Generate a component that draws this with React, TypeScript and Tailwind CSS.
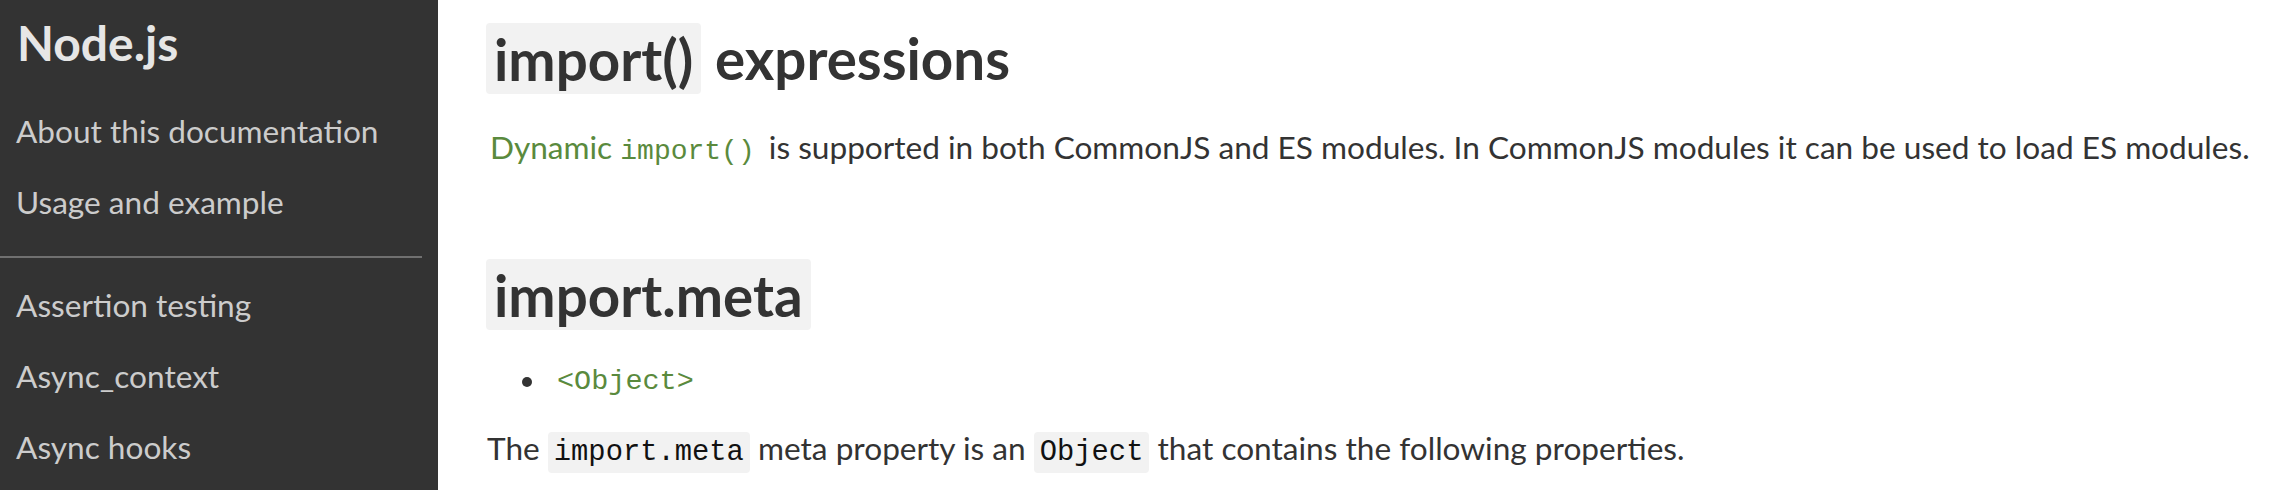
import React from 'react';

const navTop = ['About this documentation', 'Usage and example'];
const navBottom = ['Assertion testing', 'Async_context', 'Async hooks'];

const mono = "font-['Liberation_Mono',monospace]";

const App: React.FC = () => {
  return (
    <div className="flex h-[490px] w-[2276px] overflow-hidden bg-white font-['Lato',sans-serif] text-[#333]">
      {/* sidebar */}
      <div className="flex w-[438px] shrink-0 flex-col bg-[#333]">
        <div className="ml-[17px] mt-[19px] text-[48px] font-bold leading-[48px] text-[#e6e6e6]">Node.js</div>
        <div className="mt-[29px] flex flex-col">
          {navTop.map((item) => (
            <div key={item} className="pl-[16px] text-[31.6px] leading-[71px] text-[#ccc]">
              {item}
            </div>
          ))}
        </div>
        <div className="mt-[18px] h-[2px] w-[422px] bg-[#707070]" />
        <div className="mt-[12px] flex flex-col">
          {navBottom.map((item) => (
            <div key={item} className="pl-[16px] text-[31.6px] leading-[71px] text-[#ccc]">
              {item}
            </div>
          ))}
        </div>
      </div>

      {/* content */}
      <div className="flex min-w-0 flex-1 flex-col pl-12 whitespace-nowrap">
        <h2 className="mt-[22px] text-[56.5px] font-bold leading-[72px]">
          <code className="rounded-[4px] bg-[#f2f2f2] px-[8px] py-[1.5px] font-['Lato',sans-serif]">import()</code> expressions
        </h2>
        <p className="mt-[31px] pl-[4px] text-[31.6px] leading-[45px]">
          <span className="text-[#5a8a3d]">
            Dynamic <code className={`${mono} text-[28px] pr-[6px]`}>import()</code>
          </span>{' '}
          is supported in both CommonJS and ES modules. In CommonJS modules it can be used to load ES modules.
        </p>
        <h2 className="mt-[84px] text-[56.5px] font-bold leading-[72px]">
          <code className="rounded-[4px] bg-[#f2f2f2] px-[8px] py-[1.5px] font-['Lato',sans-serif]">import.meta</code>
        </h2>
        <div className="mt-[29px] flex items-center text-[31.6px] leading-[45px]">
          <span className="ml-[36px] h-[10px] w-[10px] rounded-full bg-[#333]" />
          <span className={`ml-[25px] ${mono} text-[28.5px] text-[#5a8a3d]`}>&lt;Object&gt;</span>
        </div>
        <p className="mt-[22px] pl-[1px] text-[31.6px] leading-[45px]">
          The{' '}
          <code className={`${mono} rounded-[4px] bg-[#f2f2f2] px-[6px] py-[4px] text-[28.8px] text-[#111]`}>import.meta</code>{' '}
          meta property is an{' '}
          <code className={`${mono} rounded-[4px] bg-[#f2f2f2] px-[6px] py-[4px] text-[28.8px] text-[#111]`}>Object</code>{' '}
          that contains the following properties.
        </p>
      </div>
    </div>
  );
};

export default App;
